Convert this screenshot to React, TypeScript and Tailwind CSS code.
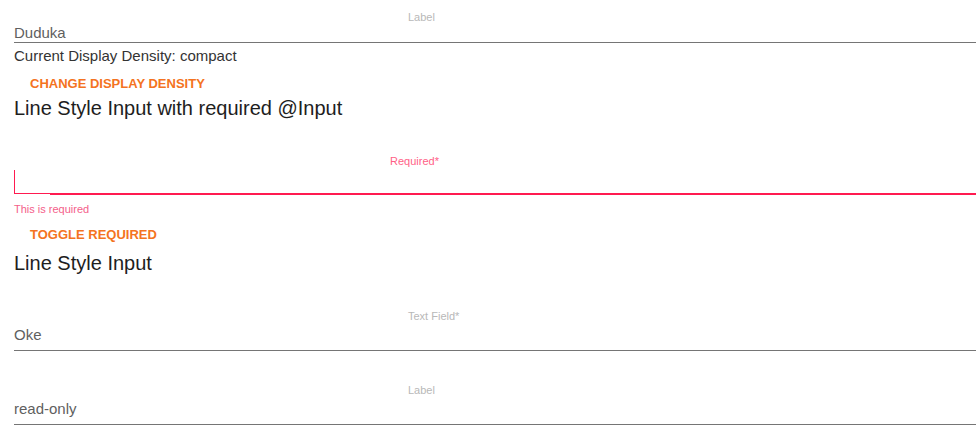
import React from "react";

const font = { fontFamily: '"Liberation Sans", Arial, sans-serif' };

interface LineFieldProps {
  label: string;
  value?: string;
  compact?: boolean;
}

function LineField({ label, value, compact }: LineFieldProps) {
  return (
    <div className={compact ? "pt-[10px]" : "pt-[32px]"}>
      <div className="h-[14px] pl-[394px] text-[11px] leading-[14px] text-[#b8b8b8]">{label}</div>
      <div
        className={
          (compact ? "h-[18px] leading-[18px]" : "h-[27px] leading-[24px]") +
          " border-b border-[#757575] text-[15px] text-[#5f5f5f] box-content"
        }
      >
        {value}
      </div>
    </div>
  );
}

function RequiredField() {
  return (
    <div className="pt-[35px]">
      <div className="h-[14px] pl-[376px] text-[11px] leading-[14px] text-[#ff5f87]">Required*</div>
      <div className="h-[24px] pt-[2px]">
        <div className="h-[24px] w-px bg-[#ff1a50]" />
      </div>
      <div className="flex h-[2px] translate-y-px">
        <div className="w-[36px] border-t border-[#ff1a50]" />
        <div className="flex-1 bg-[#ff1a50]" />
      </div>
      <div className="mt-[8px] h-[14px] text-[11px] leading-[14px] text-[#f4608a]">This is required</div>
    </div>
  );
}

function TextButton({ children }: { children: React.ReactNode }) {
  return (
    <button className="block h-[26px] px-4 text-[13px] font-bold leading-[26px] text-[#f47321]">
      {children}
    </button>
  );
}

export default function App() {
  return (
    <div className="w-[976px] bg-white pl-[14px]" style={font}>
      <LineField label="Label" value="Duduka" compact />
      <p className="mt-[3px] h-[20px] text-[15px] leading-[20px] text-[#333]">Current Display Density: compact</p>
      <div className="mt-[5px]">
        <TextButton>CHANGE DISPLAY DENSITY</TextButton>
      </div>
      <h2 className="h-[22px] text-[20px] leading-[22px] text-[#1e1e1e]">Line Style Input with required @Input</h2>
      <RequiredField />
      <div className="mt-[6px]">
        <TextButton>TOGGLE REQUIRED</TextButton>
      </div>
      <h2 className="mb-[3px] mt-[4px] h-[22px] text-[20px] leading-[22px] text-[#1e1e1e]">Line Style Input</h2>
      <LineField label="Text Field*" value="Oke" />
      <LineField label="Label" value="read-only" />
      <div className="h-[10px]" />
    </div>
  );
}
